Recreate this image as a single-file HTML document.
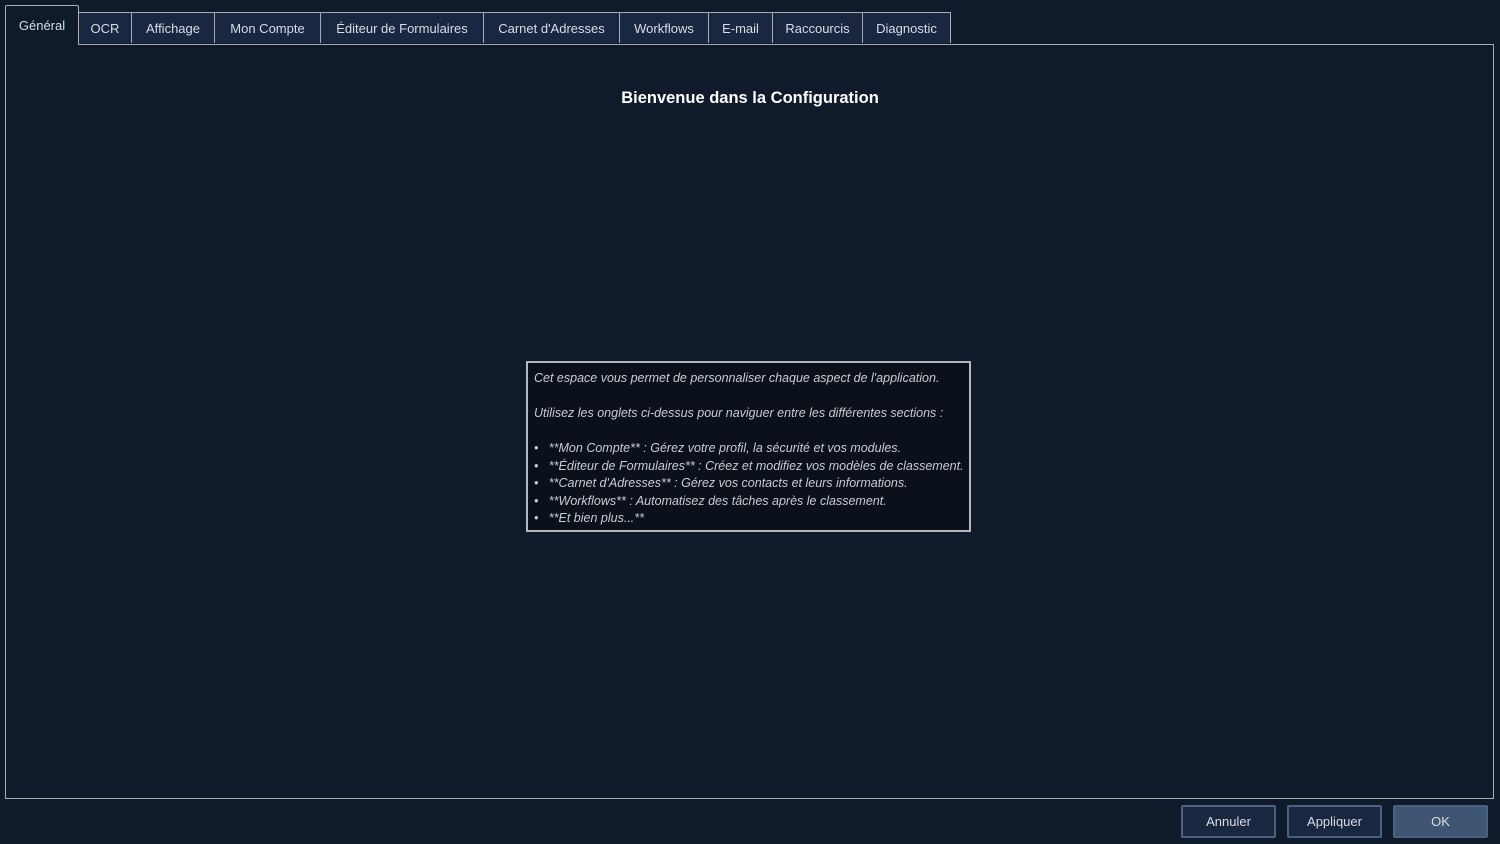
<!DOCTYPE html>
<html><head><meta charset="utf-8"><style>
body{margin:0;width:1500px;height:844px;background:#0f1a2a;font-family:"Liberation Sans",sans-serif;color:#d8dde6;position:relative;overflow:hidden}
.t{position:absolute;top:12px;height:31px;background:#1a2740;border:1px solid #a9adb3;border-bottom:none;box-sizing:border-box;font-size:13px;text-align:center;line-height:32px;color:#d8dde6}
.sel{top:5px;height:40px;background:#0f1a2a;line-height:40px;border-radius:2px 2px 0 0;z-index:2}
.panel{position:absolute;left:5px;top:44px;width:1489px;height:755px;border:1px solid #a9adb3;box-sizing:border-box}
.title{position:absolute;left:0;width:1500px;top:89px;text-align:center;font-weight:bold;font-size:16.5px;color:#fff}
.box{position:absolute;left:526px;top:361px;width:445px;height:171px;box-sizing:border-box;border:2px solid #b4b7bb;background:#0b111b;font-style:italic;font-size:12.5px;color:#c8ccd3;padding:7px 0 0 6px;line-height:17.5px;white-space:nowrap;letter-spacing:0}
.b{position:absolute;top:805px;width:95px;height:33px;box-sizing:border-box;border:2px solid #4a6282;background:#1a2740;border-radius:2px;font-size:13px;text-align:center;line-height:29px;color:#d8dde6}
</style></head><body>
<div class="panel"></div>
<div class="t sel" style="left:5px;width:74px">Général</div>
<div class="t" style="left:78px;width:54px">OCR</div>
<div class="t" style="left:131px;width:84px">Affichage</div>
<div class="t" style="left:214px;width:107px">Mon Compte</div>
<div class="t" style="left:320px;width:164px">Éditeur de Formulaires</div>
<div class="t" style="left:483px;width:137px">Carnet d'Adresses</div>
<div class="t" style="left:619px;width:90px">Workflows</div>
<div class="t" style="left:708px;width:65px">E-mail</div>
<div class="t" style="left:772px;width:91px">Raccourcis</div>
<div class="t" style="left:862px;width:89px">Diagnostic</div>
<div class="title">Bienvenue dans la Configuration</div>
<div class="box">Cet espace vous permet de personnaliser chaque aspect de l'application.<br><br>Utilisez les onglets ci-dessus pour naviguer entre les différentes sections :<br><br>•&nbsp;&nbsp; **Mon Compte** : Gérez votre profil, la sécurité et vos modules.<br>•&nbsp;&nbsp; **Éditeur de Formulaires** : Créez et modifiez vos modèles de classement.<br>•&nbsp;&nbsp; **Carnet d'Adresses** : Gérez vos contacts et leurs informations.<br>•&nbsp;&nbsp; **Workflows** : Automatisez des tâches après le classement.<br>•&nbsp;&nbsp; **Et bien plus...**</div>
<div class="b" style="left:1181px">Annuler</div>
<div class="b" style="left:1287px">Appliquer</div>
<div class="b" style="left:1393px;background:#3e5573">OK</div>
</body></html>
